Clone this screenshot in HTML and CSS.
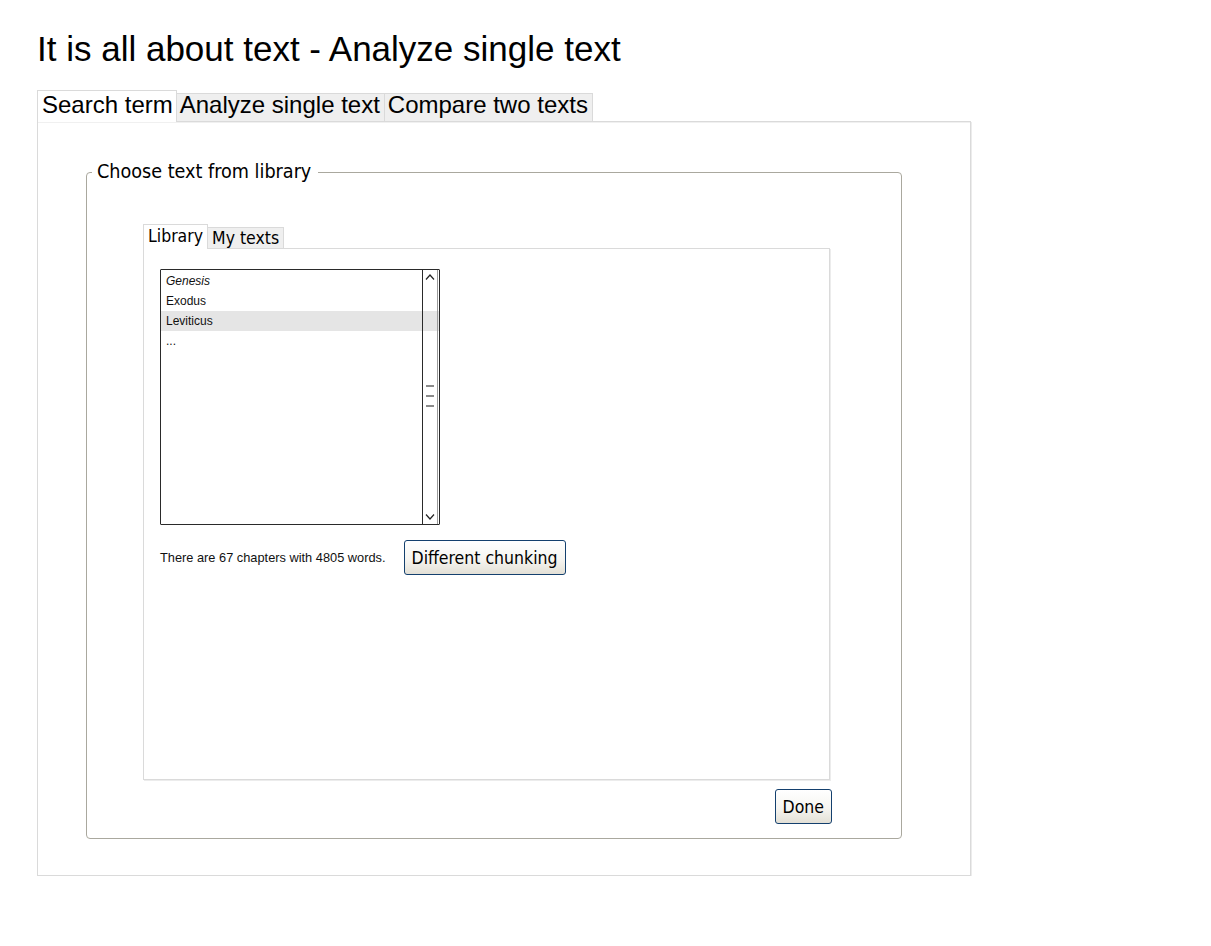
FILE: index.html
```html
<!DOCTYPE html>
<html>
<head>
<meta charset="utf-8">
<title>It is all about text - Analyze single text</title>
<link rel="stylesheet" href="styles.css">
</head>
<body>
<div class="page">
  <h1 class="title">It is all about text - Analyze single text</h1>
  <div class="tabs">
    <div class="tab tab-active">Search term</div>
    <div class="tab">Analyze single text</div>
    <div class="tab">Compare two texts</div>
  </div>
  <div class="panel">
    <fieldset class="group">
      <legend class="group-legend">Choose text from library</legend>
      <div class="group-body">
        <div class="itabs">
          <div class="itab itab-active">Library</div>
          <div class="itab">My texts</div>
        </div>
        <div class="ipanel">
          <div class="listbox">
            <div class="list-row list-italic">Genesis</div>
            <div class="list-row">Exodus</div>
            <div class="list-row list-selected">Leviticus</div>
            <div class="list-row">...</div>
            <div class="scrollbar">
              <svg class="chev chev-up" width="10" height="8" viewBox="0 0 10 8"><polyline points="1,6.5 5,2 9,6.5" fill="none" stroke="#222" stroke-width="1.2"/></svg>
              <div class="thumb">
                <span class="grip"></span><span class="grip"></span><span class="grip"></span>
              </div>
              <svg class="chev chev-down" width="10" height="8" viewBox="0 0 10 8"><polyline points="1,1.5 5,6 9,1.5" fill="none" stroke="#222" stroke-width="1.2"/></svg>
            </div>
          </div>
          <div class="info-row">
            <span class="info-text">There are 67 chapters with 4805 words.</span>
            <button class="btn btn-wide">Different chunking</button>
          </div>
        </div>
        <div class="done-row">
          <button class="btn">Done</button>
        </div>
      </div>
    </fieldset>
  </div>
</div>
</body>
</html>
```

FILE: styles.css
```css
html, body {
  margin: 0;
  padding: 0;
  background: #ffffff;
}

body {
  font-family: "Liberation Sans", Arial, sans-serif;
  color: #000;
}

.page {
  padding-left: 37px;
}

.title {
  margin: 0;
  padding-top: 29px;
  font-size: 35px;
  line-height: 40px;
  font-weight: normal;
}

.tabs {
  display: flex;
  align-items: flex-end;
  margin-top: 21px;
  position: relative;
  z-index: 2;
}

.tab {
  box-sizing: border-box;
  height: 28px;
  padding: 0 4px 0 3px;
  font-size: 24px;
  line-height: 22px;
  background: #efefef;
  border: 1px solid #dadada;
  border-bottom: none;
  border-left: none;
  white-space: nowrap;
}

.tab-active {
  height: 32px;
  line-height: 28px;
  margin-bottom: -1px;
  background: #fff;
  border-left: 1px solid #dadada;
  padding: 0 3px 0 4px;
}

.panel {
  box-sizing: border-box;
  width: 934px;
  height: 755px;
  border: 1px solid #dadada;
  box-shadow: 1px 1px 0 #ececec, inset 0 1px 0 #f0f0f0;
  padding: 38px 0 0 48px;
}

.group {
  box-sizing: border-box;
  width: 816px;
  margin: 0;
  padding: 0 0 14px 5px;
  border: 1px solid #aaa89e;
  border-radius: 4px;
  font-family: "DejaVu Sans Condensed", "DejaVu Sans", sans-serif;
}

.group-legend {
  padding: 0 7px 0 5px;
  font-size: 19.6px;
  line-height: 24px;
  font-stretch: condensed;
}

.group-body {
  margin-left: 51px;
  padding-top: 40px;
  width: 690px;
}

.itabs {
  display: flex;
  align-items: flex-end;
  position: relative;
  z-index: 2;
}

.itab {
  box-sizing: border-box;
  height: 21px;
  padding: 0 4px;
  font-size: 17.5px;
  line-height: 21px;
  background: #efefef;
  border: 1px solid #dadada;
  border-bottom: none;
  border-left: none;
  white-space: nowrap;
}

.itab-active {
  height: 25px;
  line-height: 22px;
  margin-bottom: -1px;
  background: #fff;
  border-left: 1px solid #dadada;
}

.ipanel {
  box-sizing: border-box;
  width: 687px;
  height: 532px;
  border: 1px solid #dadada;
  box-shadow: 1px 1px 0 #ececec;
  padding: 20px 0 0 16px;
}

.listbox {
  position: relative;
  box-sizing: border-box;
  width: 280px;
  height: 256px;
  border: 1px solid #2a2a2a;
  border-radius: 1px;
  padding-top: 1px;
  font-family: "Liberation Sans", Arial, sans-serif;
  font-size: 12px;
}

.list-row {
  height: 20px;
  line-height: 20px;
  padding-left: 5px;
  color: #111;
}

.list-italic {
  font-style: italic;
}

.list-selected {
  background: #e5e5e5;
}

.scrollbar {
  position: absolute;
  top: 0;
  right: 1px;
  bottom: 0;
  width: 14px;
  border-left: 1px solid #2a2a2a;
  border-right: 1px solid #9a9a9a;
  display: flex;
  flex-direction: column;
  align-items: center;
}

.chev {
  display: block;
}

.chev-up {
  margin-top: 3px;
}

.thumb {
  flex: 1;
  display: flex;
  flex-direction: column;
  justify-content: center;
  gap: 8px;
  padding-bottom: 2px;
}

.grip {
  display: block;
  width: 8px;
  height: 2px;
  background: #8a8a8a;
}

.chev-down {
  margin-bottom: 3px;
}

.info-row {
  display: flex;
  align-items: center;
  margin-top: 15px;
  gap: 18px;
}

.info-text {
  font-family: "Liberation Sans", Arial, sans-serif;
  font-size: 12.8px;
  color: #111;
}

.btn {
  box-sizing: border-box;
  height: 35px;
  padding: 0 6px;
  font-family: "DejaVu Sans Condensed", "DejaVu Sans", sans-serif;
  font-size: 17.5px;
  font-stretch: condensed;
  color: #000;
  border: 1px solid #14406e;
  border-radius: 3px;
  background: linear-gradient(#ffffff 0%, #f6f5f1 55%, #e3e0d6 100%);
}

.btn-wide {
  padding: 0 7px;
}

.done-row {
  display: flex;
  justify-content: flex-end;
  width: 689px;
  margin-top: 9px;
}

.done-row .btn {
  padding: 0 7px;
}
```
